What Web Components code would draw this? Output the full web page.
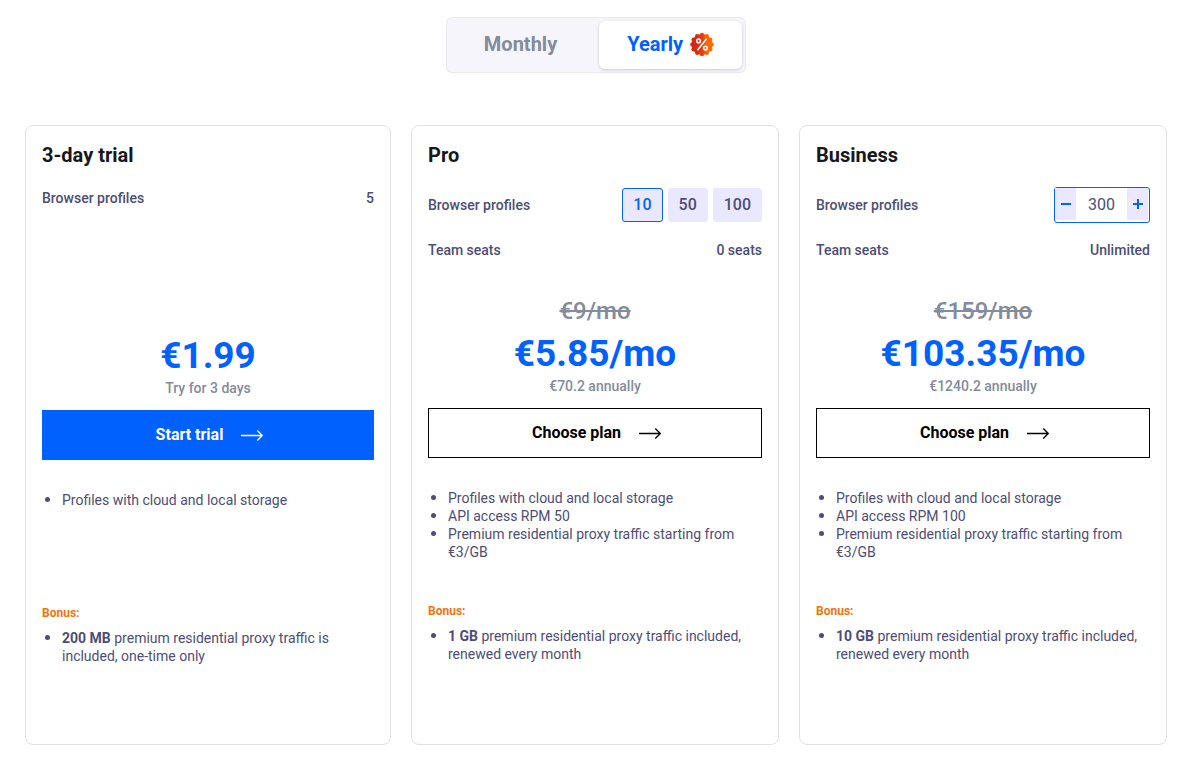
<!DOCTYPE html>
<html lang="en">
<head>
<meta charset="utf-8">
<meta name="viewport" content="width=device-width, initial-scale=1">
<title>Pricing</title>
<style>
  body {
    margin: 0;
    background: #ffffff;
    font-family: Roboto, "Liberation Sans", sans-serif;
  }
</style>
</head>
<body>

<pricing-page>
  <billing-switch slot="switch"></billing-switch>

  <plan-card name="3-day trial" price="€1.99" note="Try for 3 days" action="Start trial" primary>
    <spec-row slot="specs" label="Browser profiles">5</spec-row>
    <li slot="features">Profiles with cloud and local storage</li>
    <li slot="bonus"><b>200 MB</b> premium residential proxy traffic is included, one-time only</li>
  </plan-card>

  <plan-card name="Pro" old-price="€9/mo" price="€5.85/mo" note="€70.2 annually" action="Choose plan">
    <spec-row slot="specs" label="Browser profiles" tall><profile-picker options="10,50,100" value="10"></profile-picker></spec-row>
    <spec-row slot="specs" label="Team seats">0 seats</spec-row>
    <li slot="features">Profiles with cloud and local storage</li>
    <li slot="features">API access RPM 50</li>
    <li slot="features">Premium residential proxy traffic starting from €3/GB</li>
    <li slot="bonus"><b>1 GB</b> premium residential proxy traffic included, renewed every month</li>
  </plan-card>

  <plan-card name="Business" old-price="€159/mo" price="€103.35/mo" note="€1240.2 annually" action="Choose plan">
    <spec-row slot="specs" label="Browser profiles" tall><profile-stepper value="300" step="100"></profile-stepper></spec-row>
    <spec-row slot="specs" label="Team seats">Unlimited</spec-row>
    <li slot="features">Profiles with cloud and local storage</li>
    <li slot="features">API access RPM 100</li>
    <li slot="features">Premium residential proxy traffic starting from €3/GB</li>
    <li slot="bonus"><b>10 GB</b> premium residential proxy traffic included, renewed every month</li>
  </plan-card>
</pricing-page>

<script>
class PricingPage extends HTMLElement {
  constructor() {
    super();
    this.attachShadow({ mode: "open" });
  }

  connectedCallback() {
    this.shadowRoot.innerHTML = `
      <style>
        :host {
          --color-blue: #0061ff;
          --color-text: #4d4d77;
          --color-muted: #848b9c;
          --color-lilac: #e9e8ff;
          --color-title: #17171c;
          --color-orange: #f77307;

          display: block;
          box-sizing: border-box;
          padding: 17px 18px 15px 25px;
        }

        .switch {
          display: flex;
          justify-content: center;
          margin-bottom: 52px;
        }

        .plans {
          display: grid;
          grid-template-columns: 366fr 368fr 368fr;
          gap: 20px;
        }
      </style>

      <main>
        <div class="switch"><slot name="switch"></slot></div>
        <div class="plans"><slot></slot></div>
      </main>
    `;
  }
}

class BillingSwitch extends HTMLElement {
  constructor() {
    super();
    this.attachShadow({ mode: "open" });
  }

  connectedCallback() {
    this.shadowRoot.innerHTML = `
      <style>
        :host {
          display: block;
        }

        .switch {
          display: flex;
          gap: 8px;
          padding: 3px;
          border: 1px solid #e9e9ef;
          border-radius: 6px;
          background: #f6f5fb;
        }

        button {
          display: flex;
          align-items: center;
          gap: 7px;
          height: 48px;
          padding: 0 34px 2px;
          border: none;
          border-radius: 6px;
          background: none;
          color: var(--color-muted);
          font: 700 20px/24px Roboto, sans-serif;
          cursor: pointer;
        }

        button[aria-pressed="true"] {
          padding: 0 28px 2px;
          background: #ffffff;
          color: var(--color-blue);
          box-shadow: 0 1px 3px rgba(30, 30, 60, 0.2);
        }
      </style>

      <div class="switch" role="group" aria-label="Billing period">
        <button type="button" aria-pressed="false">Monthly</button>
        <button type="button" aria-pressed="true">Yearly <discount-badge></discount-badge></button>
      </div>
    `;

    const buttons = this.shadowRoot.querySelectorAll("button");
    buttons.forEach((button) => {
      button.addEventListener("click", () => {
        buttons.forEach((b) => b.setAttribute("aria-pressed", String(b === button)));
      });
    });
  }
}

class DiscountBadge extends HTMLElement {
  constructor() {
    super();
    this.attachShadow({ mode: "open" });
  }

  connectedCallback() {
    // twelve bumps round the disc
    let bumps = "";
    for (let i = 0; i < 12; i++) {
      const a = (i * Math.PI) / 6;
      const x = (12 + 9.6 * Math.cos(a)).toFixed(2);
      const y = (12.5 + 9.6 * Math.sin(a)).toFixed(2);
      bumps += `<circle cx="${x}" cy="${y}" r="2.2"/>`;
    }

    this.shadowRoot.innerHTML = `
      <style>
        :host {
          display: block;
        }

        svg {
          display: block;
          width: 24px;
          height: 25px;
        }
      </style>

      <svg viewBox="0 0 24 25" aria-hidden="true">
        <defs>
          <linearGradient id="fill" gradientUnits="userSpaceOnUse" x1="0" y1="0" x2="24" y2="0">
            <stop offset="0" stop-color="#d3200f"/>
            <stop offset="0.3" stop-color="#d92c12"/>
            <stop offset="0.55" stop-color="#e8430e"/>
            <stop offset="0.65" stop-color="#fb6406"/>
            <stop offset="1" stop-color="#ff6f05"/>
          </linearGradient>
        </defs>
        <g fill="url(#fill)">
          <circle cx="12" cy="12.5" r="10.4"/>
          ${bumps}
        </g>
        <g fill="none" stroke="#ffffff" stroke-width="1.5" stroke-linecap="round">
          <path d="M16.2 7.3 7.8 17.7"/>
          <circle cx="8.6" cy="8.9" r="1.8"/>
          <circle cx="15.4" cy="16.1" r="1.8"/>
        </g>
      </svg>
    `;
  }
}

class SpecRow extends HTMLElement {
  constructor() {
    super();
    this.attachShadow({ mode: "open" });
  }

  connectedCallback() {
    const label = this.getAttribute("label") || "";

    this.shadowRoot.innerHTML = `
      <style>
        :host {
          display: flex;
          align-items: center;
          justify-content: space-between;
          min-height: 20px;
          color: var(--color-text);
          font-size: 14px;
          font-weight: 500;
          line-height: 20px;
        }

        :host([tall]) {
          min-height: 36px;
        }
      </style>

      <span>${label}</span>
      <div><slot></slot></div>
    `;
  }
}

class ProfilePicker extends HTMLElement {
  constructor() {
    super();
    this.attachShadow({ mode: "open" });
  }

  connectedCallback() {
    const options = (this.getAttribute("options") || "").split(",");
    const value = this.getAttribute("value");

    this.shadowRoot.innerHTML = `
      <style>
        :host {
          display: flex;
          gap: 5px;
        }

        button {
          height: 34px;
          padding: 0 10px;
          border: 1px solid var(--color-lilac);
          border-radius: 3px;
          background: var(--color-lilac);
          color: var(--color-text);
          font: 500 16px/20px Roboto, sans-serif;
          cursor: pointer;
        }

        button[aria-pressed="true"] {
          border-color: var(--color-blue);
          color: var(--color-blue);
        }
      </style>

      ${options.map((o) => `<button type="button" aria-pressed="${o === value}">${o}</button>`).join("")}
    `;

    const buttons = this.shadowRoot.querySelectorAll("button");
    buttons.forEach((button) => {
      button.addEventListener("click", () => {
        buttons.forEach((b) => b.setAttribute("aria-pressed", String(b === button)));
      });
    });
  }
}

class ProfileStepper extends HTMLElement {
  constructor() {
    super();
    this.attachShadow({ mode: "open" });
  }

  connectedCallback() {
    const step = Number(this.getAttribute("step")) || 1;

    this.shadowRoot.innerHTML = `
      <style>
        :host {
          display: block;
        }

        .stepper {
          display: flex;
          align-items: flex-start;
          height: 34px;
          padding-right: 1px;
          border: 1px solid var(--color-blue);
          border-radius: 3px;
        }

        button {
          display: flex;
          align-items: center;
          justify-content: center;
          width: 21px;
          height: 32px;
          padding: 0;
          border: none;
          background: var(--color-lilac);
          color: var(--color-blue);
          cursor: pointer;
        }

        input {
          box-sizing: border-box;
          width: 51px;
          height: 32px;
          padding: 0;
          border: none;
          outline: none;
          background: none;
          color: var(--color-text);
          font: 400 16px/20px Roboto, sans-serif;
          text-align: center;
        }
      </style>

      <div class="stepper">
        <button type="button" aria-label="Fewer profiles">
          <svg width="12" height="12" viewBox="0 0 12 12"><path d="M1 6h10" stroke="currentColor" stroke-width="2"/></svg>
        </button>
        <input type="text" inputmode="numeric" aria-label="Browser profiles" value="${this.getAttribute("value")}">
        <button type="button" aria-label="More profiles">
          <svg width="12" height="12" viewBox="0 0 12 12"><path d="M1 6h10M6 1v10" stroke="currentColor" stroke-width="2"/></svg>
        </button>
      </div>
    `;

    const input = this.shadowRoot.querySelector("input");
    const [minus, plus] = this.shadowRoot.querySelectorAll("button");
    minus.addEventListener("click", () => {
      input.value = Math.max(step, Number(input.value) - step);
    });
    plus.addEventListener("click", () => {
      input.value = Number(input.value) + step;
    });
  }
}

class PlanCard extends HTMLElement {
  constructor() {
    super();
    this.attachShadow({ mode: "open" });
  }

  connectedCallback() {
    const name = this.getAttribute("name") || "";
    const oldPrice = this.getAttribute("old-price");
    const price = this.getAttribute("price") || "";
    const note = this.getAttribute("note") || "";
    const action = this.getAttribute("action") || "";

    this.shadowRoot.innerHTML = `
      <style>
        :host {
          display: block;
          box-sizing: border-box;
          padding: 16px 16px 79px;
          border: 1px solid #e1e2e4;
          border-radius: 8px;
          background: #ffffff;
        }

        h2 {
          margin: 0 0 19px;
          color: var(--color-title);
          font-size: 20px;
          font-weight: 700;
          line-height: 26px;
        }

        .specs {
          display: flex;
          flex-direction: column;
          gap: 17px;
          min-height: 109px;
        }

        .price {
          display: flex;
          flex-direction: column;
          align-items: center;
          justify-content: flex-end;
          margin-bottom: 12px;
        }

        :host([primary]) .price {
          min-height: 101px;
        }

        :host([primary]) .specs {
          padding-top: 1px;
        }

        .old {
          margin-bottom: 6px;
          color: var(--color-muted);
          font-size: 24px;
          font-weight: 500;
          line-height: 30px;
        }

        .now {
          color: var(--color-blue);
          font-size: 37px;
          font-weight: 700;
          line-height: 44px;
        }

        .note {
          color: var(--color-muted);
          font-size: 14px;
          font-weight: 500;
          line-height: 20px;
        }

        .action {
          display: flex;
          align-items: center;
          justify-content: center;
          gap: 16px;
          width: 100%;
          height: 50px;
          margin-bottom: 31px;
          padding: 0 0 0 5px;
          border: 1px solid #000000;
          border-radius: 0;
          background: #ffffff;
          color: #000000;
          font: 700 16px/20px Roboto, sans-serif;
          cursor: pointer;
        }

        :host([primary]) .action {
          border-color: var(--color-blue);
          background: var(--color-blue);
          color: #ffffff;
        }

        ul {
          margin: 0;
          padding: 0 0 0 20px;
          list-style: none;
          color: var(--color-text);
          font-size: 14px;
          line-height: 18px;
        }

        ::slotted(li)::before {
          content: "";
          display: inline-block;
          width: 5px;
          height: 5px;
          margin: 0 12px 4px -17px;
          border-radius: 50%;
          background: currentColor;
          vertical-align: middle;
        }

        .features {
          min-height: 114px;
        }

        h3 {
          margin: 0 0 8px;
          color: var(--color-orange);
          font-size: 12px;
          font-weight: 700;
          line-height: 16px;
        }
      </style>

      <h2>${name}</h2>
      <div class="specs"><slot name="specs"></slot></div>
      <div class="price">
        ${oldPrice ? `<s class="old">${oldPrice}</s>` : ""}
        <div class="now">${price}</div>
        <div class="note">${note}</div>
      </div>
      <button type="button" class="action">
        ${action}
        <svg width="26" height="14" viewBox="0 0 26 14" fill="none" stroke="currentColor" stroke-width="1.3" aria-hidden="true">
          <path d="M2 7.5h21.3M18.3 2.5l5 5-5 5"/>
        </svg>
      </button>
      <ul class="features"><slot name="features"></slot></ul>
      <h3>Bonus:</h3>
      <ul><slot name="bonus"></slot></ul>
    `;
  }
}

customElements.define("pricing-page", PricingPage);
customElements.define("billing-switch", BillingSwitch);
customElements.define("discount-badge", DiscountBadge);
customElements.define("spec-row", SpecRow);
customElements.define("profile-picker", ProfilePicker);
customElements.define("profile-stepper", ProfileStepper);
customElements.define("plan-card", PlanCard);
</script>
</body>
</html>
